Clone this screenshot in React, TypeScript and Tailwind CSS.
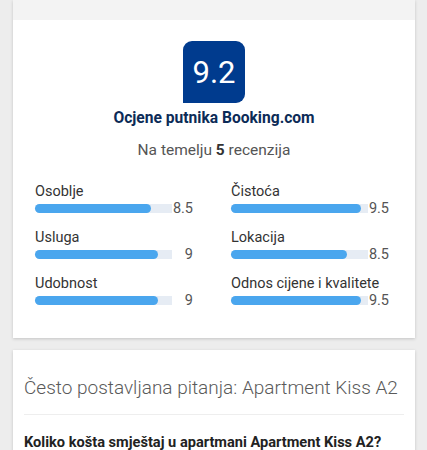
const ratings = [
  { label: "Osoblje", value: 8.5 },
  { label: "Čistoća", value: 9.5 },
  { label: "Usluga", value: 9 },
  { label: "Lokacija", value: 8.5 },
  { label: "Udobnost", value: 9 },
  { label: "Odnos cijene i kvalitete", value: 9.5 },
]

function RatingBar({ label, value }: { label: string; value: number }) {
  return (
    <div className="flex flex-col">
      <span className="text-[14.5px] leading-[17px] text-[#333]">{label}</span>
      <div className="flex h-[17px] items-center pr-[4px]">
        <div className="h-[9px] flex-1 rounded-l-full bg-[#e6ecf4]">
          <div
            className="h-full rounded-full bg-[#4aa6ee]"
            style={{ width: `${value * 10}%` }}
          ></div>
        </div>
        <span className="w-[21px] text-right text-[14.5px] leading-[17px] text-[#555]">{value}</span>
      </div>
    </div>
  )
}

export default function App() {
  return (
    <div
      className="min-h-[450px] bg-[#ededed] pl-[13px] pr-[12px] pb-6"
      style={{ fontFamily: "Roboto, 'Liberation Sans', sans-serif" }}
    >
      {/* Review score card */}
      <div className="bg-white shadow-[0_1px_3px_rgba(0,0,0,0.18)]">
        <div className="h-[20px] bg-[#f3f3f3]"></div>
        <div className="flex flex-col items-center pt-[21px]">
          <div className="flex h-[62px] w-[62px] items-center justify-center rounded-t-[9px] rounded-br-[9px] bg-[#003b8e] text-[31px] leading-none text-white">
            9.2
          </div>
          <h2 className="mt-[6px] text-[15.6px] font-bold leading-[18px] text-[#0c2b57]">
            Ocjene putnika Booking.com
          </h2>
          <p className="mt-[14px] text-[15.5px] leading-[18px] text-[#555]">
            Na temelju <span className="font-bold text-[#333]">5</span> recenzija
          </p>
        </div>
        <div className="grid grid-cols-2 gap-x-[34px] gap-y-[12px] px-[22px] pt-[24px] pb-[29px]">
          {ratings.map((r) => (
            <RatingBar key={r.label} label={r.label} value={r.value} />
          ))}
        </div>
      </div>

      {/* FAQ card */}
      <div className="mt-[12px] bg-white px-[11px] shadow-[0_1px_3px_rgba(0,0,0,0.18)]">
        <h2 className="whitespace-nowrap pt-[26px] pb-[14px] text-[19px] font-light leading-[24px] text-[#5a5a5a]">
          Često postavljana pitanja: Apartment Kiss A2
        </h2>
        <div className="border-t border-[#eeeeee]"></div>
        <p className="pt-[18px] pb-4 text-[14.6px] font-bold leading-[18px] text-[#222]">
          Koliko košta smještaj u apartmani Apartment Kiss A2?
        </p>
      </div>
    </div>
  )
}
